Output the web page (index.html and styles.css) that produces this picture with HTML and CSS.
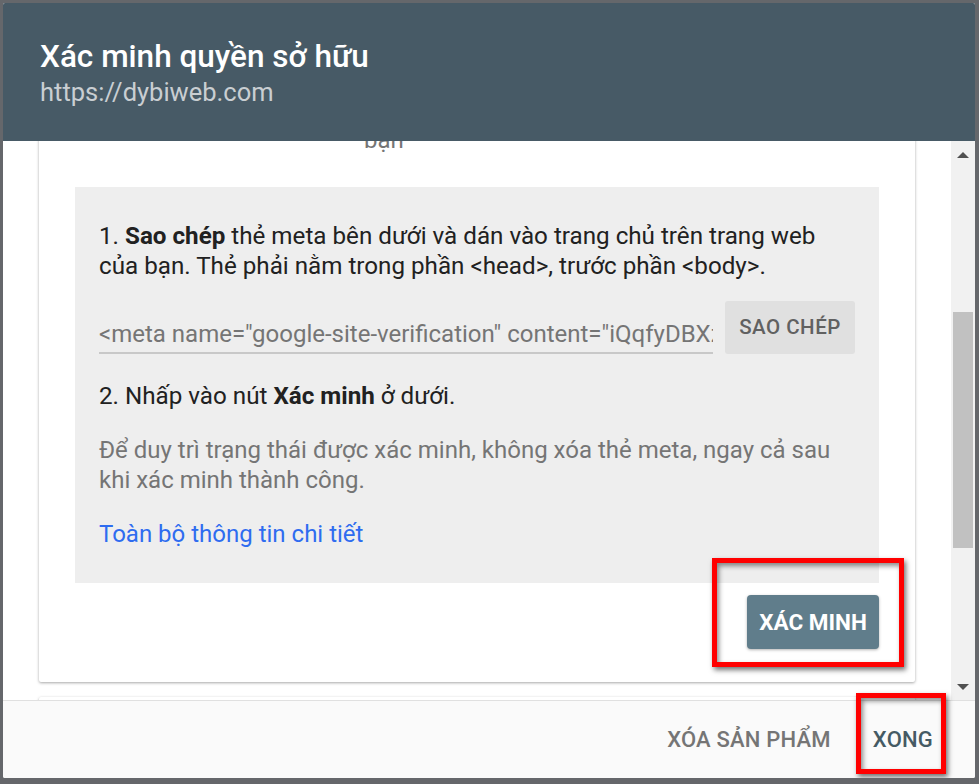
FILE: index.html
```html
<!DOCTYPE html>
<html lang="vi">
<head>
<meta charset="utf-8">
<link rel="stylesheet" href="styles.css">
</head>
<body>
<div class="dialog">
  <header class="head">
    <h1 class="title">Xác minh quyền sở hữu</h1>
    <div class="subtitle">https://dybiweb.com</div>
  </header>
  <div class="body">
    <div class="scroll">
      <div class="card">
        <div class="prev">bạn</div>
        <div class="box">
          <p class="step">1. <b>Sao chép</b> thẻ meta bên dưới và dán vào trang chủ trên trang web<br>của bạn. Thẻ phải nằm trong phần <span class="mono">&lt;head&gt;</span>, trước phần <span class="mono">&lt;body&gt;</span>.</p>
          <div class="copyrow">
            <div class="field">&lt;meta name="google-site-verification" content="iQqfyDBXzK8vT2mP" /&gt;</div>
            <div class="copybtn">SAO CHÉP</div>
          </div>
          <p class="step step2">2. Nhấp vào nút <b>Xác minh</b> ở dưới.</p>
          <p class="note">Để duy trì trạng thái được xác minh, không xóa thẻ meta, ngay cả sau khi xác minh thành công.</p>
          <a class="link">Toàn bộ thông tin chi tiết</a>
        </div>
        <div class="actions">
          <div class="verify">XÁC MINH</div>
        </div>
      </div>
      <div class="card next"></div>
    </div>
    <div class="scrollbar">
      <div class="arrow up"></div>
      <div class="track"><div class="thumb"></div></div>
      <div class="arrow down"></div>
    </div>
  </div>
  <footer class="foot">
    <div class="fbtn remove">XÓA SẢN PHẨM</div>
    <div class="fbtn done">XONG</div>
  </footer>
  <div class="mark mark-verify"></div>
  <div class="mark mark-done"></div>
</div>
</body>
</html>
```
FILE: styles.css
```css
* { box-sizing: border-box; }
html, body { margin: 0; padding: 0; }
body {
  background: #65676b;
  font-family: Roboto, "Noto Sans", sans-serif;
  width: 979px;
  height: 784px;
  overflow: hidden;
}
.dialog {
  position: relative;
  margin: 3px 0 0 3px;
  width: 972px;
  height: 775px;
  background: #fff;
  border-radius: 2px;
  display: flex;
  flex-direction: column;
  overflow: hidden;
}
.head {
  background: #475a66;
  height: 138px;
  padding: 36px 0 0 37px;
  flex: none;
  position: relative;
  z-index: 2;
}
.title {
  margin: 0;
  font-size: 31.5px;
  font-weight: 500;
  color: #fff;
  line-height: 36px;
}
.subtitle {
  margin-top: 2px;
  font-size: 25.5px;
  color: #c9ced2;
  line-height: 30px;
}
.body {
  flex: 1;
  display: flex;
  min-height: 0;
}
.scroll {
  flex: 1;
  overflow: hidden;
  padding-left: 36px;
  padding-right: 36px;
}
.card {
  background: #fff;
  margin-top: -16px;
  box-shadow: 0 1px 3px rgba(0,0,0,0.35);
  border-radius: 2px;
  padding: 0 36px 33px 36px;
}
.prev {
  padding-left: 289px;
  font-size: 24px;
  color: #757575;
  line-height: 30px;
  height: 62px;
}
.box {
  background: #eeeeee;
  padding: 34px 24px 34px 24px;
}
.step {
  margin: 0;
  font-size: 24.2px;
  line-height: 30px;
  color: #212121;
}
.step b { font-weight: 700; }
.mono { font-family: Roboto, sans-serif; }
.copyrow {
  display: flex;
  align-items: center;
  gap: 12px;
  margin-top: 20px;
}
.field {
  flex: 1;
  min-width: 0;
  white-space: nowrap;
  overflow: hidden;
  font-size: 24px;
  color: #757575;
  line-height: 30px;
  border-bottom: 2px solid #c8c8c8;
  padding-top: 18px;
  padding-bottom: 3px;
}
.copybtn {
  flex: none;
  width: 130px;
  height: 53px;
  background: #e0e0e0;
  border-radius: 3px;
  color: #616161;
  font-size: 20.5px;
  font-weight: 500;
  letter-spacing: 0.5px;
  text-align: center;
  line-height: 53px;
}
.step2 { margin-top: 27px; }
.note {
  margin: 24px 0 0;
  font-size: 24px;
  line-height: 30px;
  color: #757575;
}
.link {
  display: block;
  margin-top: 24px;
  font-size: 24px;
  line-height: 30px;
  color: #2e6cf0;
}
.actions {
  display: flex;
  justify-content: flex-end;
  margin-top: 12px;
}
.verify {
  width: 132px;
  height: 54px;
  background: #607d8b;
  color: #fff;
  border-radius: 4px;
  font-size: 22.5px;
  font-weight: 700;
  text-align: center;
  line-height: 54px;
  box-shadow: 0 1px 3px rgba(0,0,0,0.3);
}
.card.next {
  margin-top: 15px;
  height: 40px;
  padding: 0;
}
.scrollbar {
  flex: none;
  width: 24px;
  background: #f1f1f1;
  display: flex;
  flex-direction: column;
  align-items: center;
}
.arrow {
  width: 0;
  height: 0;
  border-left: 6px solid transparent;
  border-right: 6px solid transparent;
  flex: none;
}
.arrow.up { border-bottom: 6px solid #505050; margin-top: 11px; }
.arrow.down { border-top: 6px solid #505050; margin-bottom: 10px; }
.track { flex: 1; width: 100%; padding: 0 2px; }
.thumb {
  margin-top: 154px;
  height: 236px;
  background: #c1c1c1;
}
.foot {
  flex: none;
  height: 78px;
  background: #fafafa;
  border-top: 1px solid #e0e0e0;
  display: flex;
  justify-content: flex-end;
  align-items: center;
  padding-right: 42px;
  gap: 42px;
  position: relative;
  z-index: 2;
}
.fbtn {
  font-size: 22px;
  font-weight: 500;
  letter-spacing: 0.2px;
}
.remove { color: #757575; }
.done { color: #455a64; }
.mark {
  position: absolute;
  border: 5px solid #ff0000;
  box-shadow: 2px 3px 5px rgba(0,0,0,0.55), inset 2px 3px 5px rgba(0,0,0,0.45);
  z-index: 5;
}
.mark-verify { left: 709px; top: 555px; width: 192px; height: 109px; }
.mark-done { left: 853px; top: 690px; width: 90px; height: 81px; }
```
